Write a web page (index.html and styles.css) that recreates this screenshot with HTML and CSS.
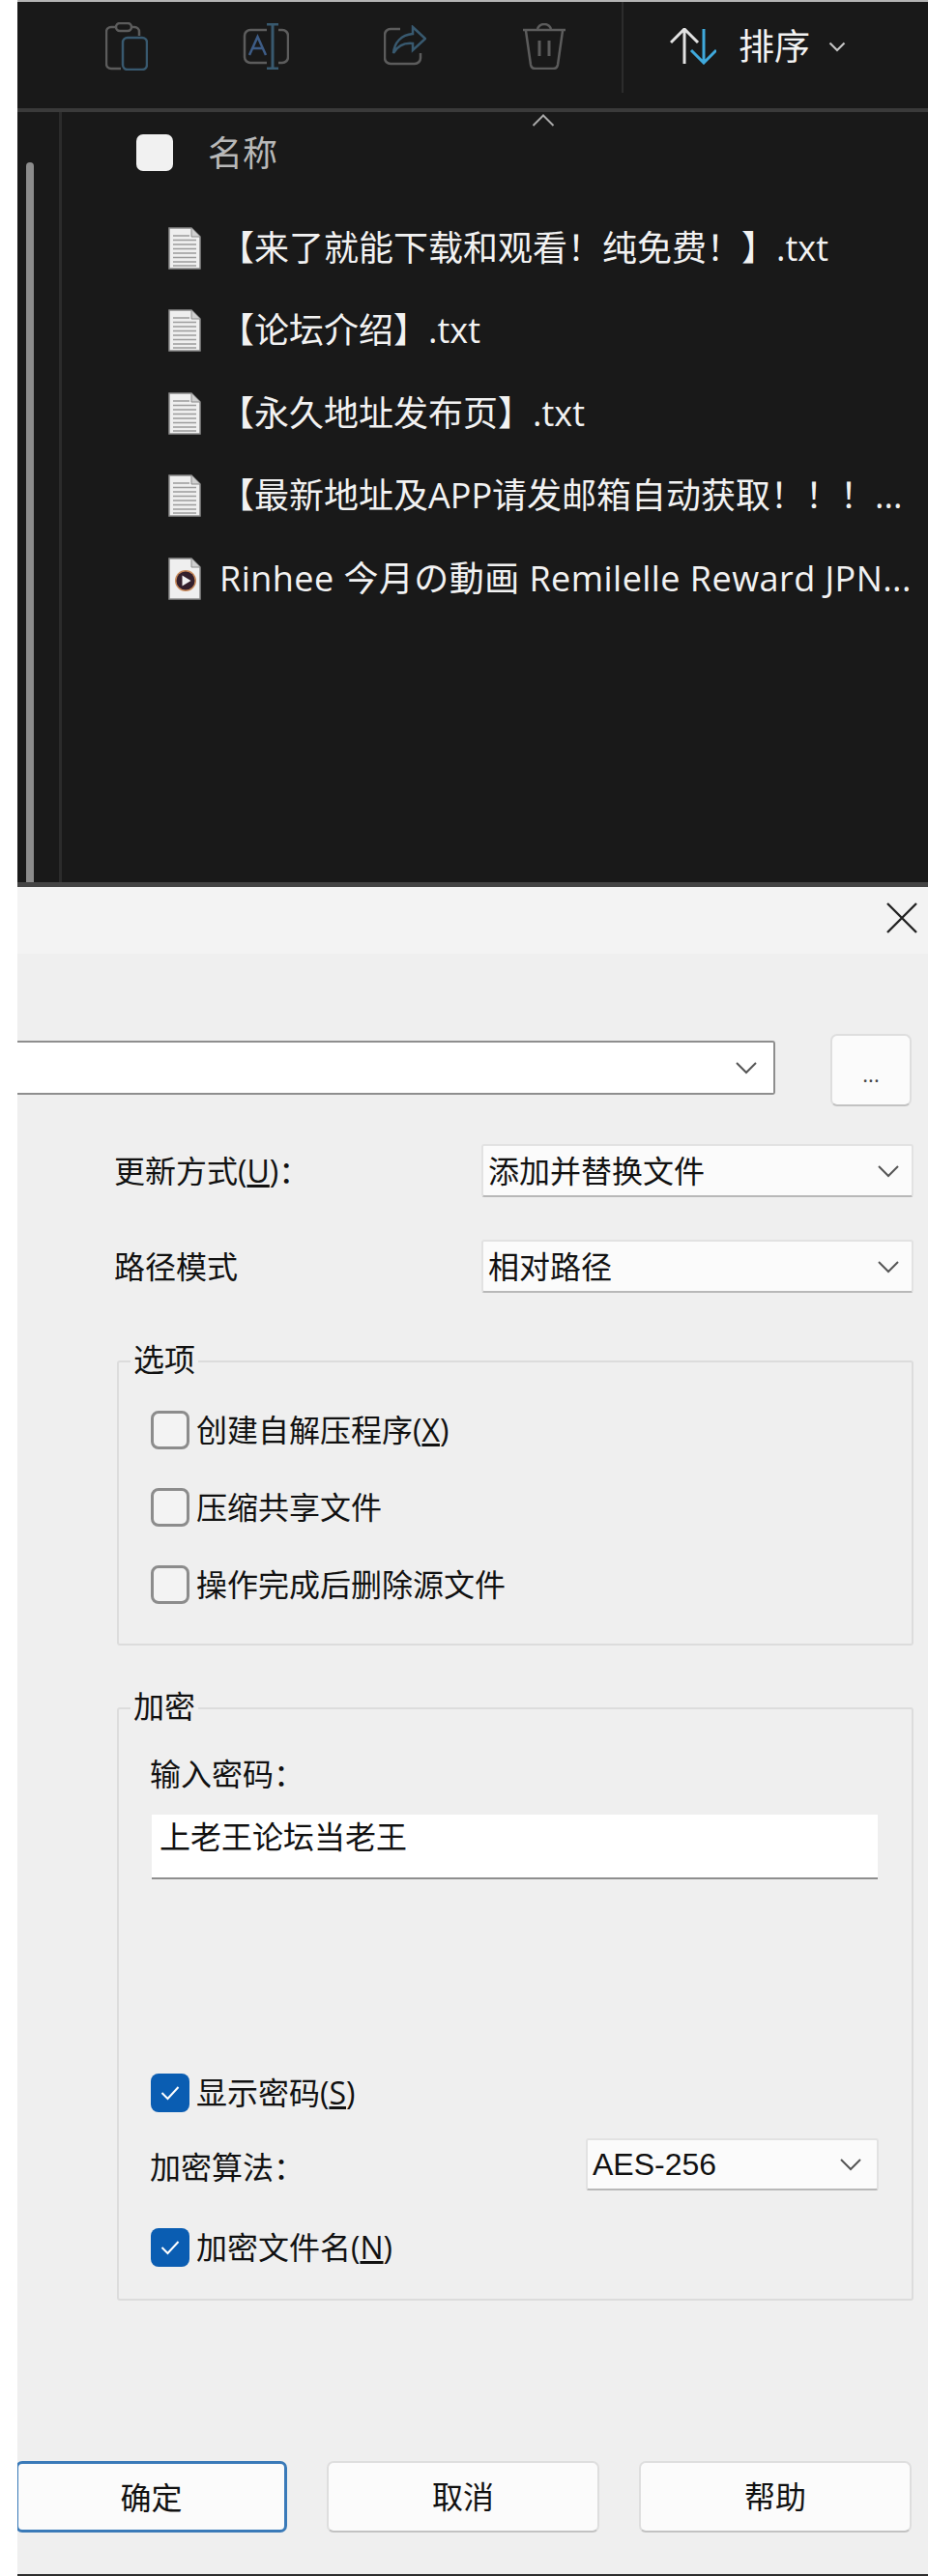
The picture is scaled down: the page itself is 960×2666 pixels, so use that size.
FILE: index.html
```html
<!DOCTYPE html>
<html lang="zh-CN">
<head>
<meta charset="utf-8">
<title>压缩文件</title>
<link rel="stylesheet" href="styles.css">
</head>
<body>
<svg class="defs" width="0" height="0" aria-hidden="true">
  <defs>
    <symbol id="paper" viewBox="0 0 34 44">
      <path d="M1 1H24L33 10V43H1Z" fill="#efefef" stroke="#8a8a8a" stroke-width="1.5"/>
      <path d="M24 1V10H33" fill="#cfcfcf" stroke="#8a8a8a" stroke-width="1"/>
    </symbol>
    <symbol id="doc" viewBox="0 0 34 44">
      <use href="#paper"/>
      <path d="M5 9H22M5 13.500H29M5 18H29M5 22.500H29M5 27H29M5 31.500H29M5 36H29M5 40H29" stroke="#9c9c9c" stroke-width="1.600"/>
    </symbol>
    <symbol id="chev" viewBox="0 0 24 14">
      <path d="M2 2L12 12L22 2" fill="none" stroke="#555" stroke-width="2"/>
    </symbol>
  </defs>
</svg>
<div class="app">
  <section class="explorer">
    <header class="toolbar">
      <div class="tool">
        <svg class="ico ico-paste" viewBox="0 0 44 50" fill="none" stroke-width="2.500">
          <path class="g" d="M16 48H6a5 5 0 0 1-5-5V10a5 5 0 0 1 5-5H11M27 5H30a5 5 0 0 1 5 5V14"/>
          <rect class="g" x="11" y="1" width="16" height="8" rx="4"/>
          <rect class="b" x="18" y="16" width="25" height="33" rx="5"/>
        </svg>
      </div>
      <div class="tool">
        <svg class="ico ico-rename" viewBox="0 0 48 48" fill="none" stroke-width="2.500">
          <path class="g" d="M25 7H8a6 6 0 0 0-6 6V35a6 6 0 0 0 6 6H25M37 7H41a6 6 0 0 1 6 6V35a6 6 0 0 1-6 6H37"/>
          <path class="b" d="M31 1V47M25 1H37M25 47H37" stroke-width="3"/>
          <path class="a" d="M7 33L15.500 14L24 33M10.500 26H20.500"/>
        </svg>
      </div>
      <div class="tool">
        <svg class="ico ico-share" viewBox="0 0 44 44" fill="none" stroke-width="2.500">
          <path class="g" d="M17 4H7a6 6 0 0 0-6 6V34a6 6 0 0 0 6 6H32a6 6 0 0 0 6-6V29"/>
          <path class="b" d="M30 2L43 14L30 26V19C20 18 14 22 10 29C11 18 18 10 30 9Z"/>
        </svg>
      </div>
      <div class="tool">
        <svg class="ico ico-trash" viewBox="0 0 44 48" fill="none" stroke-width="2.500">
          <path class="g" d="M0 7H44M15 7a7 6 0 0 1 14 0M3 8L8 43a5 5 0 0 0 5 4H31a5 5 0 0 0 5-4L41 8"/>
          <path class="g" d="M17 18V34M27 18V34" stroke-width="3"/>
        </svg>
      </div>
      <div class="tool-sep"></div>
      <div class="sort">
        <svg class="sort-ico" viewBox="0 0 48 38" fill="none" stroke-width="3">
          <path d="M15 37V2M1 15L15 1L29 15" stroke="#e2e2e2"/>
          <path d="M35 1V36M22 23L35 36L48 23" stroke="#3fa9dc"/>
        </svg>
        <span class="sort-label">排序</span>
        <svg class="sort-chev" viewBox="0 0 18 11" fill="none">
          <path d="M1.500 1.500L9 9L16.500 1.500" stroke="#c4c4c4" stroke-width="2.200"/>
        </svg>
      </div>
    </header>
    <div class="browser">
      <div class="rail"><div class="scrollbar"></div></div>
      <div class="files">
        <div class="columns">
          <svg class="caret" viewBox="0 0 24 13" fill="none">
            <path d="M1.500 12L12 1.500L22.500 12" stroke="#a8a8a8" stroke-width="2"/>
          </svg>
          <span class="head-check"></span>
          <span class="head-name">名称</span>
        </div>
        <div class="file"><svg class="file-ico"><use href="#doc"/></svg><span class="file-name">【来了就能下载和观看&#xFF01;纯免费&#xFF01;】.txt</span></div>
        <div class="file"><svg class="file-ico"><use href="#doc"/></svg><span class="file-name">【论坛介绍】.txt</span></div>
        <div class="file"><svg class="file-ico"><use href="#doc"/></svg><span class="file-name">【永久地址发布页】.txt</span></div>
        <div class="file"><svg class="file-ico"><use href="#doc"/></svg><span class="file-name">【最新地址及APP请发邮箱自动获取&#xFF01;&#xFF01;&#xFF01;...</span></div>
        <div class="file">
          <svg class="file-ico" viewBox="0 0 34 44">
            <use href="#paper"/>
            <circle cx="18" cy="24" r="11" fill="#c98a5a"/>
            <circle cx="18" cy="24" r="9.500" fill="#34202c"/>
            <path d="M14.500 18.500L23.500 24L14.500 29.500Z" fill="#f2f2f2"/>
          </svg>
          <span class="file-name file-name-latin">Rinhee 今月の動画 Remilelle Reward JPN...</span>
        </div>
      </div>
    </div>
  </section>

  <section class="dialog">
    <div class="titlebar">
      <svg class="close" viewBox="0 0 32 32" fill="none">
        <path d="M1 1L31 31M31 1L1 31" stroke="#222" stroke-width="2.400"/>
      </svg>
    </div>
    <div class="path-row">
      <div class="combo">
        <svg class="chev-ico"><use href="#chev"/></svg>
      </div>
      <div class="browse">...</div>
    </div>
    <div class="field">
      <span class="field-label">更新方式(<u>U</u>)&#xFF1A;</span>
      <div class="select select-wide"><span>添加并替换文件</span><svg class="chev-ico"><use href="#chev"/></svg></div>
    </div>
    <div class="field field-second">
      <span class="field-label">路径模式</span>
      <div class="select select-wide"><span>相对路径</span><svg class="chev-ico"><use href="#chev"/></svg></div>
    </div>

    <div class="group group-options">
      <span class="legend">选项</span>
      <div class="check-row"><span class="check"></span><span>创建自解压程序(<u>X</u>)</span></div>
      <div class="check-row"><span class="check"></span><span>压缩共享文件</span></div>
      <div class="check-row"><span class="check"></span><span>操作完成后删除源文件</span></div>
    </div>

    <div class="group group-crypt">
      <span class="legend">加密</span>
      <div class="pw-label">输入密码&#xFF1A;</div>
      <div class="pw-input">上老王论坛当老王</div>
      <div class="check-row row-show">
        <span class="check on"><svg viewBox="0 0 20 16" fill="none"><path d="M1.500 8L7.500 14L18.500 2" stroke="#fff" stroke-width="2"/></svg></span>
        <span>显示密码(<u>S</u>)</span>
      </div>
      <div class="algo">
        <span>加密算法&#xFF1A;</span>
        <div class="select select-algo"><span>AES-256</span><svg class="chev-ico"><use href="#chev"/></svg></div>
      </div>
      <div class="check-row">
        <span class="check on"><svg viewBox="0 0 20 16" fill="none"><path d="M1.500 8L7.500 14L18.500 2" stroke="#fff" stroke-width="2"/></svg></span>
        <span>加密文件名(<u>N</u>)</span>
      </div>
    </div>

    <div class="actions">
      <div class="btn btn-default">确定</div>
      <div class="btn">取消</div>
      <div class="btn">帮助</div>
    </div>
  </section>
  <div class="edge"></div>
</div>
</body>
</html>
```
FILE: styles.css
```css
* { box-sizing: border-box; }
html, body { margin: 0; padding: 0; background: #fff; }
body { width: 960px; height: 2666px; overflow: hidden; }
.defs { position: absolute; }

.app {
  margin-left: 18px;
  width: 942px;
  height: 2666px;
  overflow: hidden;
  border-top: 2px solid #b4b4b4;
  font-family: "Open Sans", "Noto Sans CJK SC", sans-serif;
}

/* ---------- explorer ---------- */
.explorer { background: #191919; color: #f2f2f2; }
.toolbar {
  display: flex;
  align-items: flex-start;
  height: 114px;
  padding-left: 41px;
  border-bottom: 4px solid #3a3a3a;
}
.tool {
  width: 144px;
  height: 92px;
  display: flex;
  align-items: center;
  justify-content: center;
}
.ico .g { stroke: #5c5c5c; }
.ico .b { stroke: #38596f; }
.ico .a { stroke: #3d5c86; }
.ico-paste { width: 44px; height: 50px; }
.ico-rename { width: 48px; height: 48px; }
.ico-share { width: 44px; height: 44px; }
.ico-trash { width: 44px; height: 48px; }
.tool-sep { width: 2px; height: 94px; margin-left: 8px; background: #2c2c2c; }
.sort {
  display: flex;
  align-items: center;
  height: 92px;
  margin-left: 48px;
}
.sort-ico { width: 48px; height: 38px; }
.sort-label { margin-left: 23px; font-size: 37px; line-height: 44px; }
.sort-chev { width: 18px; height: 11px; margin-left: 19px; }

.browser { display: flex; height: 797px; }
.rail { width: 46px; padding: 52px 0 0 9px; border-right: 3px solid #2b2b2b; }
.scrollbar { width: 8px; height: 100%; background: #8c8c8c; border-radius: 4px 4px 0 0; }
.files { flex: 1; min-width: 0; }
.columns {
  position: relative;
  display: flex;
  align-items: flex-start;
  height: 98px;
  padding: 23px 0 0 77px;
}
.caret { position: absolute; left: 486px; top: 2px; width: 24px; height: 13px; }
.head-check { width: 38px; height: 38px; border-radius: 7px; background: #f1f1f1; }
.head-name { margin-left: 36px; font-size: 36px; line-height: 40px; color: #b8b8b8; }
.file {
  display: flex;
  align-items: center;
  height: 85.5px;
  padding-left: 110px;
  white-space: nowrap;
}
.file-ico { flex: none; width: 34px; height: 44px; }
.file-name { margin-left: 19px; font-size: 36px; line-height: 44px; }
.file-name-latin { letter-spacing: 0.45px; }

/* ---------- dialog ---------- */
.dialog {
  height: 1751px;
  padding-bottom: 43px;
  background: #efefef;
  border-top: 5px solid #444;
  color: #111;
  font-size: 32px;
  line-height: 40px;
}
.titlebar {
  display: flex;
  justify-content: flex-end;
  align-items: center;
  height: 69px;
  padding: 0 11px 5px 0;
  background: #f3f3f3;
}
.close { width: 32px; height: 32px; }
.path-row { display: flex; align-items: flex-start; height: 75px; margin-top: 83px; padding-right: 17px; }
.combo {
  display: flex;
  align-items: center;
  justify-content: flex-end;
  width: 784px;
  height: 56px;
  margin-top: 7px;
  padding-right: 16px;
  background: #fff;
  border: 2px solid #8e8e8e;
  border-left: 0;
  border-radius: 0 3px 3px 0;
}
.chev-ico { flex: none; width: 24px; height: 14px; }
.browse {
  width: 84px;
  height: 75px;
  margin-left: 57px;
  background: #fbfbfb;
  border: 2px solid #dedede;
  border-bottom-color: #c2c2c2;
  border-radius: 7px;
  text-align: center;
  font-size: 22px;
  line-height: 78px;
  color: #444;
}
.field { display: flex; align-items: center; justify-content: space-between; margin-top: 39px; padding: 0 15px 0 100px; }
.field-second { margin-top: 44px; }
.select {
  display: flex;
  align-items: center;
  justify-content: space-between;
  background: #fbfbfb;
  border: 2px solid #e2e2e2;
  border-bottom-color: #b8b8b8;
  border-radius: 3px;
}
.select-wide { width: 447px; height: 55px; padding: 0 12px 0 5px; }
.select-algo { width: 303px; height: 54px; padding: 0 15px 0 5px; font-family: "Liberation Sans", sans-serif; }

.group {
  position: relative;
  width: 824px;
  margin-left: 103px;
  border: 2px solid #dcdcdc;
  border-radius: 3px;
}
.group-options { margin-top: 70px; padding: 50px 0 41px 33px; display: flex; flex-direction: column; gap: 40px; }
.group-crypt { margin-top: 64px; height: 614px; padding: 47px 35px 34px 33px; }
.legend { position: absolute; left: 12px; top: -20px; padding: 0 3px; background: #efefef; line-height: 34px; }
.check-row { display: flex; align-items: center; height: 40px; gap: 7px; }
.check {
  flex: none;
  display: flex;
  align-items: center;
  justify-content: center;
  width: 40px;
  height: 40px;
  border: 3px solid #8c8c8c;
  border-radius: 8px;
  background: #f3f3f3;
}
.check.on { border: 0; background: #0a5db2; }
.check svg { width: 20px; height: 16px; }
.pw-label { margin-left: -1px; }
.pw-input {
  height: 67px;
  margin: 22px 0 0 1px;
  padding: 3px 0 0 8px;
  background: #fff;
  border-bottom: 2px solid #8e8e8e;
}
.row-show { margin-top: 201px; }
.algo { display: flex; align-items: center; justify-content: space-between; margin: 27px -1px 39px -1px; }
.algo > span { padding-top: 6px; }

.actions { display: flex; gap: 41px; margin: 166px 0 0 -2px; }
.btn {
  width: 282px;
  height: 74px;
  background: #fbfbfb;
  border: 2px solid #dedede;
  border-bottom-color: #c2c2c2;
  border-radius: 7px;
  text-align: center;
  line-height: 70px;
}
.btn-default { width: 281px; border: 3px solid #3a7ab8; }
.edge { height: 2px; background: #2e2e2e; }
```
